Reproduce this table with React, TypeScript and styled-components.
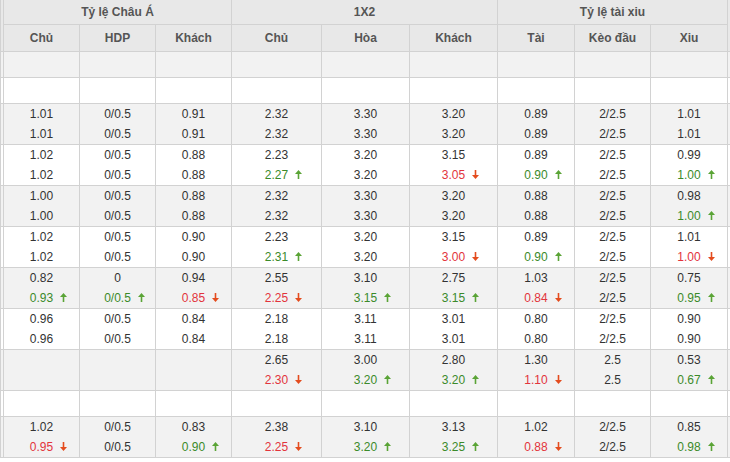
import React from "react";
import styled, { createGlobalStyle } from "styled-components";

const GlobalStyle = createGlobalStyle`
  html, body {
    margin: 0;
    padding: 0;
    background: #fff;
  }
  body {
    font-family: "Liberation Sans", Arial, sans-serif;
    overflow: hidden;
  }
`;

type Tone = "up" | "down" | undefined;
type Odd = { v: string; t?: Tone };
type Cell = [Odd, Odd] | null;
type Row = { cells: Cell[]; empty?: boolean };

const Frame = styled.div`
  width: 730px;
  height: 462px;
  overflow: hidden;
`;

const Table = styled.table`
  border-collapse: collapse;
  table-layout: fixed;
  width: 747px;
  font-size: 12px;
  color: #333;
`;

const Head = styled.th<{ $h: number }>`
  height: ${(p) => p.$h}px;
  padding: 0;
  background: #e8e8e8;
  color: #555;
  font-weight: bold;
  font-size: 12px;
  text-align: center;
  border: 1px solid #d2d2d2;
  border-top: none;
`;

const BodyRow = styled.tr<{ $gray: boolean }>`
  background: ${(p) => (p.$gray ? "#f2f2f2" : "#fff")};
`;

const Td = styled.td<{ $h: number }>`
  height: ${(p) => p.$h}px;
  padding: 0;
  text-align: center;
  vertical-align: middle;
  border: 1px solid #d2d2d2;
`;

const Line = styled.div`
  height: 20px;
  line-height: 20px;
`;

const Value = styled.span<{ $tone?: Tone }>`
  position: relative;
  color: ${(p) =>
    p.$tone === "up" ? "#3b8a2a" : p.$tone === "down" ? "#e2343c" : "#333"};
`;

const ArrowMark = styled.svg`
  position: absolute;
  left: 100%;
  top: 50%;
  margin-left: 7px;
  margin-top: -5px;
`;

const Arrow = ({ dir }: { dir: "up" | "down" }) => (
  <ArrowMark width="7" height="9" viewBox="0 0 7 9">
    {dir === "up" ? (
      <path d="M3.5 0 L7 4 L4.3 4 L4.3 9 L2.7 9 L2.7 4 L0 4 Z" fill="#5aa436" />
    ) : (
      <path d="M3.5 9 L7 5 L4.3 5 L4.3 0 L2.7 0 L2.7 5 L0 5 Z" fill="#e44c1e" />
    )}
  </ArrowMark>
);

const o = (v: string, t?: Tone): Odd => ({ v, t });
const same = (v: string): Cell => [o(v), o(v)];
const pair = (a: string, b: string, t?: Tone): Cell => [o(a), o(b, t)];

const blank: Cell[] = [null, null, null, null, null, null, null, null, null];

const rows: Row[] = [
  { cells: blank, empty: true },
  { cells: blank, empty: true },
  {
    cells: [
      same("1.01"), same("0/0.5"), same("0.91"), same("2.32"), same("3.30"),
      same("3.20"), same("0.89"), same("2/2.5"), same("1.01"),
    ],
  },
  {
    cells: [
      same("1.02"), same("0/0.5"), same("0.88"), pair("2.23", "2.27", "up"),
      same("3.20"), pair("3.15", "3.05", "down"), pair("0.89", "0.90", "up"),
      same("2/2.5"), pair("0.99", "1.00", "up"),
    ],
  },
  {
    cells: [
      same("1.00"), same("0/0.5"), same("0.88"), same("2.32"), same("3.30"),
      same("3.20"), same("0.88"), same("2/2.5"), pair("0.98", "1.00", "up"),
    ],
  },
  {
    cells: [
      same("1.02"), same("0/0.5"), same("0.90"), pair("2.23", "2.31", "up"),
      same("3.20"), pair("3.15", "3.00", "down"), pair("0.89", "0.90", "up"),
      same("2/2.5"), pair("1.01", "1.00", "down"),
    ],
  },
  {
    cells: [
      pair("0.82", "0.93", "up"), pair("0", "0/0.5", "up"), pair("0.94", "0.85", "down"),
      pair("2.55", "2.25", "down"), pair("3.10", "3.15", "up"), pair("2.75", "3.15", "up"),
      pair("1.03", "0.84", "down"), same("2/2.5"), pair("0.75", "0.95", "up"),
    ],
  },
  {
    cells: [
      same("0.96"), same("0/0.5"), same("0.84"), same("2.18"), same("3.11"),
      same("3.01"), same("0.80"), same("2/2.5"), same("0.90"),
    ],
  },
  {
    cells: [
      null, null, null, pair("2.65", "2.30", "down"), pair("3.00", "3.20", "up"),
      pair("2.80", "3.20", "up"), pair("1.30", "1.10", "down"), same("2.5"),
      pair("0.53", "0.67", "up"),
    ],
  },
  { cells: blank, empty: true },
  {
    cells: [
      pair("1.02", "0.95", "down"), same("0/0.5"), pair("0.83", "0.90", "up"),
      pair("2.38", "2.25", "down"), pair("3.10", "3.20", "up"), pair("3.13", "3.25", "up"),
      pair("1.02", "0.88", "down"), same("2/2.5"), pair("0.85", "0.98", "up"),
    ],
  },
];

const widths = [3, 76, 76, 76, 90, 88, 88, 77, 76, 77, 20];
const subHeads = ["Chủ", "HDP", "Khách", "Chủ", "Hòa", "Khách", "Tài", "Kèo đầu", "Xiu"];

const OddLine = ({ odd }: { odd: Odd }) => (
  <Line>
    <Value $tone={odd.t}>
      {odd.v}
      {odd.t && <Arrow dir={odd.t} />}
    </Value>
  </Line>
);

export default function App() {
  return (
    <Frame>
      <GlobalStyle />
      <Table>
        <colgroup>
          {widths.map((w, i) => (
            <col key={i} style={{ width: w }} />
          ))}
        </colgroup>
        <thead>
          <tr>
            <Head $h={24} rowSpan={2} />
            <Head $h={24} colSpan={3}>Tỷ lệ Châu Á</Head>
            <Head $h={24} colSpan={3}>1X2</Head>
            <Head $h={24} colSpan={3}>Tỷ lệ tài xiu</Head>
            <Head $h={24} rowSpan={2} />
          </tr>
          <tr>
            {subHeads.map((s, i) => (
              <Head key={i} $h={26}>
                {s}
              </Head>
            ))}
          </tr>
        </thead>
        <tbody>
          {rows.map((r, i) => (
            <BodyRow key={i} $gray={i % 2 === 0}>
              <Td $h={r.empty ? 25 : 40} />
              {r.cells.map((c, j) => (
                <Td key={j} $h={r.empty ? 25 : 40}>
                  {c && (
                    <>
                      <OddLine odd={c[0]} />
                      <OddLine odd={c[1]} />
                    </>
                  )}
                </Td>
              ))}
              <Td $h={r.empty ? 25 : 40} />
            </BodyRow>
          ))}
        </tbody>
      </Table>
    </Frame>
  );
}
